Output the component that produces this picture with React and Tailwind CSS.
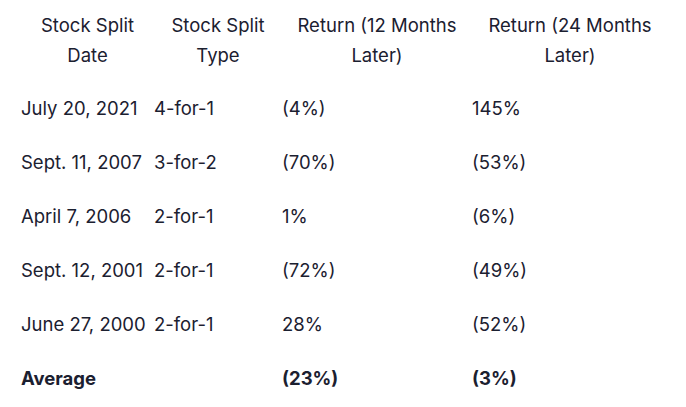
import React from 'react';

const rows = [
  ['July 20, 2021', '4-for-1', '(4%)', '145%'],
  ['Sept. 11, 2007', '3-for-2', '(70%)', '(53%)'],
  ['April 7, 2006', '2-for-1', '1%', '(6%)'],
  ['Sept. 12, 2001', '2-for-1', '(72%)', '(49%)'],
  ['June 27, 2000', '2-for-1', '28%', '(52%)'],
];

const App = () => {
  return (
    <div className="w-[686px] h-[407px] bg-white pt-[10px] pl-[21px] text-[#1b2030] text-[18.5px] leading-[30px] font-['Inter',sans-serif] overflow-hidden">
      <table className="border-collapse table-fixed w-[647px]">
        <colgroup>
          <col className="w-[133px]" />
          <col className="w-[128px]" />
          <col className="w-[190px]" />
          <col className="w-[196px]" />
        </colgroup>
        <thead>
          <tr>
            <th className="font-normal text-center align-top p-0 pb-[11px]">Stock Split<br />Date</th>
            <th className="font-normal text-center align-top p-0 pb-[11px]">Stock Split<br />Type</th>
            <th className="font-normal text-center align-top p-0 pb-[11px]">Return (12 Months<br />Later)</th>
            <th className="font-normal text-center align-top p-0 pb-[11px]">Return (24 Months<br />Later)</th>
          </tr>
        </thead>
        <tbody>
          {rows.map((r) => (
            <tr key={r[0]}>
              {r.map((c, i) => (
                <td key={i} className="p-0 py-3 text-left whitespace-nowrap">{c}</td>
              ))}
            </tr>
          ))}
          <tr className="font-bold">
            <td className="p-0 py-3">Average</td>
            <td className="p-0 py-3"></td>
            <td className="p-0 py-3">(23%)</td>
            <td className="p-0 py-3">(3%)</td>
          </tr>
        </tbody>
      </table>
    </div>
  );
};

export default App;
